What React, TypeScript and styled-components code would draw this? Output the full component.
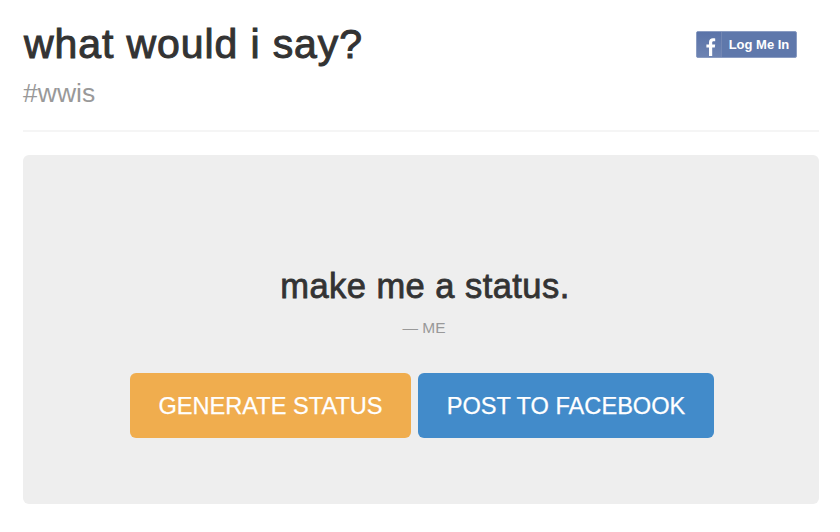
import React from 'react';
import styled, { createGlobalStyle } from 'styled-components';

const GlobalStyle = createGlobalStyle`
  html, body {
    margin: 0;
    padding: 0;
    background: #fff;
    font-family: "Liberation Sans", Arial, sans-serif;
    color: #333;
  }
  * { box-sizing: border-box; }
`;

const FacebookF = () => (
  <svg width="16" height="20" viewBox="0 0 16 20">
    <path
      d="M6 20V11.5H3.4V8.4H6V6.3C6 3.6 7.6 2.3 10 2.3c1 0 1.8.1 2.2.1v2.8h-1.5c-1.2 0-1.5.6-1.5 1.4v1.8h3l-.4 3.1H9.2V20z"
      fill="#fff"
    />
  </svg>
);

const App = () => (
  <>
    <GlobalStyle />
    <Page>
      <Header>
        <div>
          <Title>what would i say?</Title>
          <Subtitle>#wwis</Subtitle>
        </div>
        <LoginButton>
          <IconBox>
            <FacebookF />
          </IconBox>
          <LoginLabel>Log Me In</LoginLabel>
        </LoginButton>
      </Header>
      <Hero>
        <Quote>make me a status.</Quote>
        <Attribution>— ME</Attribution>
        <Actions>
          <ActionButton $color="#f0ad4e" $width={281}>
            GENERATE STATUS
          </ActionButton>
          <ActionButton $color="#428bca" $width={296}>
            POST TO FACEBOOK
          </ActionButton>
        </Actions>
      </Hero>
    </Page>
  </>
);

export default App;

const Page = styled.div`
  width: 840px;
  height: 532px;
  padding: 0 21px 0 23px;
  overflow: hidden;
`;

const Header = styled.div`
  height: 132px;
  padding-top: 22px;
  display: flex;
  justify-content: space-between;
  align-items: flex-start;
  border-bottom: 2px solid #f5f5f5;
`;

const Title = styled.h1`
  margin: 0 0 0 1px;
  font-size: 41px;
  line-height: 45px;
  font-weight: 400;
  letter-spacing: 0.9px;
  color: #333;
  -webkit-text-stroke: 1px #333;
`;

const Subtitle = styled.div`
  margin-top: 5px;
  font-size: 26.5px;
  line-height: 42px;
  color: #999;
`;

const LoginButton = styled.div`
  width: 101px;
  height: 27px;
  margin: 9px 22px 0 0;
  display: flex;
  align-items: stretch;
  background: #5f78ab;
  border: 1px solid #8a9cc2;
  border-radius: 2px;
`;

const IconBox = styled.div`
  width: 25px;
  padding: 0 0 1px 3px;
  display: flex;
  align-items: flex-end;
  justify-content: center;
  background: linear-gradient(#5a73a8, #6d83b2);
  border-right: 1px solid #7387b3;
`;

const LoginLabel = styled.span`
  flex: 1;
  font-size: 13px;
  line-height: 25px;
  font-weight: 700;
  text-align: center;
  color: #fff;
`;

const Hero = styled.div`
  height: 349px;
  margin-top: 23px;
  padding-top: 111px;
  display: flex;
  flex-direction: column;
  align-items: center;
  background: #eee;
  border-radius: 6px;
`;

const Quote = styled.div`
  margin-left: 8px;
  font-size: 34.5px;
  line-height: 40px;
  letter-spacing: 0.45px;
  color: #333;
  -webkit-text-stroke: 0.8px #333;
`;

const Attribution = styled.div`
  margin-top: 12px;
  margin-left: 6px;
  font-size: 15.5px;
  line-height: 20px;
  color: #999;
`;

const Actions = styled.div`
  margin-top: 35px;
  margin-left: 2px;
  display: flex;
  gap: 7px;
`;

const ActionButton = styled.div<{ $color: string; $width: number }>`
  width: ${(p) => p.$width}px;
  height: 65px;
  padding-top: 1px;
  display: flex;
  align-items: center;
  justify-content: center;
  background: ${(p) => p.$color};
  border-radius: 6px;
  color: #fff;
  font-size: 23.6px;
  -webkit-text-stroke: 0.25px #fff;
`;
